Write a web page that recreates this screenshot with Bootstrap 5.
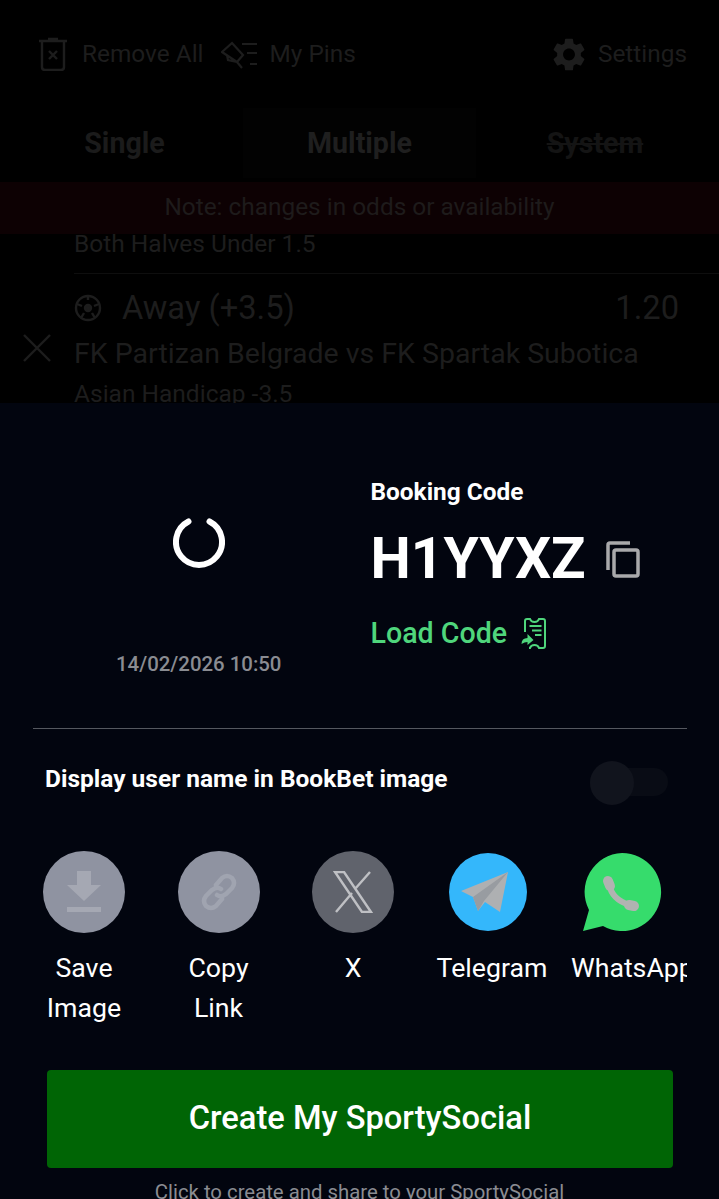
<!DOCTYPE html>
<html lang="en">
<head>
    <meta charset="UTF-8">
    <meta name="viewport" content="width=device-width, initial-scale=1.0">
    <title>Booking Code</title>
    <link href="https://cdn.jsdelivr.net/npm/bootstrap@5.3.2/dist/css/bootstrap.min.css" rel="stylesheet">
    <style>
        html, body { height: 1199px; overflow: hidden; background: #02050f; font-family: Roboto, "Liberation Sans", sans-serif; }
        .page-wrap { width: 719px; height: 1199px; overflow: hidden; }

        /* dimmed bet slip behind the sheet */
        .slip { height: 403px; overflow: hidden; background: #000; color: #1d1d1d; }
        .slip-tools { height: 108px; padding: 0 32px 0 38px; font-size: 24.4px; }
        .tool-gap-a { margin-left: 14px; }
        .tool-gap-b { margin-left: 17px; }
        .tool-gap-c { margin-left: 11px; }
        .tool-gap-d { margin-left: 13px; }
        .slip-tabs { height: 74px; }
        .slip-tab { height: 70px; width: 243px; font-size: 28.6px; font-weight: 700; color: #1b1b1b; }
        .slip-tab-first { padding-left: 6px; }
        .slip-tab-mid { width: 233px; background: #020202; color: #1f1f1f; }
        .slip-tab-off { color: #141414; text-decoration: line-through; padding-right: 5px; }
        .slip-note { height: 52px; padding-bottom: 2px; background: #0d0103; color: #1e1b1b; font-size: 24.4px; }
        .slip-body { padding: 0 0 0 74px; }
        .slip-close { left: 22px; top: 333px; }
        .slip-market { font-size: 24.5px; line-height: 30px; }
        .slip-market-top { margin-top: -5px; }
        .slip-market-end { margin-top: 6px; }
        .slip-sep { height: 1px; background: #0e0e0e; margin: 14px 0 16px; }
        .slip-pick { font-size: 32.7px; line-height: 36px; padding-right: 40px; }
        .slip-teams { font-size: 28.5px; line-height: 38px; margin-top: 9px; }

        /* share sheet */
        .sheet { height: 796px; background: #02050f; color: #fff; }
        .code-box { height: 325px; }
        .code-left { width: 370.5px; padding: 113px 0 0 27px; }
        .code-spin { width: 52px; height: 52px; }
        .code-date { font-size: 20.4px; color: #8a8c92; margin-top: 84px; line-height: 24px; font-weight: 500; }
        .code-label { font-size: 24.4px; font-weight: 700; line-height: 30px; margin-top: 74px; }
        .code-value { font-size: 57px; font-weight: 700; line-height: 68px; margin-top: 18px; }
        .code-copy { margin-left: 20px; }
        .code-load { font-size: 28.6px; font-weight: 500; color: #4fd67c; line-height: 34px; margin-top: 23px; }
        .code-ticket { margin-left: 14px; }
        .sheet-rule { height: 1px; margin: 0 32px 0 33px; background: #55585f; }
        .name-row { height: 102px; padding: 0 51px 0 45px; font-size: 24.5px; font-weight: 700; }
        .name-text { margin-bottom: 2px; }
        .name-toggle { width: 78px; height: 28px; margin-top: 3px; border-radius: 14px; background: #090c15; }
        .name-knob { left: 0; top: -7px; width: 44px; height: 44px; border-radius: 50%; background: #11141d; }
        .share-row { margin: 20px 32px 0 33px; overflow: hidden; gap: 32.5px; }
        .share-item { width: 102px; flex: none; font-size: 26.7px; line-height: 40px; text-align: center; }
        .share-ico { width: 82px; height: 82px; margin: 0 auto 15px; }
        .share-last { text-align: left; white-space: nowrap; width: 120px; }
        .share-last .share-ico { margin-left: 10px; }
        .share-dl { background: #8f93a1; }
        .share-x { background: #60636c; }
        .create-btn { margin: 42px 46px 0 47px; width: 626px; height: 98px; border-radius: 4px; background: #006505; border: 0; color: #fff; font-size: 32.7px; font-weight: 500; }
        .create-btn:hover { background: #006505; color: #fff; }
        .create-note { font-size: 20.35px; color: #8a8c92; line-height: 24px; margin-top: 12px; }
    </style>
</head>
<body>
    <div class="page-wrap">
        <!-- bet slip dimmed by the overlay -->
        <div class="slip position-relative">
            <div class="slip-tools d-flex align-items-center">
                <svg width="30" height="34" viewBox="0 0 30 34" fill="none" stroke="#1d1d1d" stroke-width="2.4"><path d="M1 4h28M10 2h10M4 5v25q0 3 3 3h16q3 0 3-3V5M11 14l8 8M19 14l-8 8"/></svg>
                <span class="tool-gap-a">Remove All</span>
                <svg class="tool-gap-b" width="38" height="32" viewBox="0 0 38 32" fill="none" stroke="#1d1d1d" stroke-width="2.2"><path d="M1 14L11 5l11 12-6 7zM6 17l1 5 9 2M16 24l5 6M21 6h15M26 15h10M29 26h7"/></svg>
                <span class="tool-gap-c">My Pins</span>
                <svg class="ms-auto" width="32" height="33" viewBox="2.3 2 19.4 20"><path fill="#1d1d1d" d="M19.14 12.94c.04-.3.06-.61.06-.94 0-.32-.02-.64-.07-.94l2.03-1.58c.18-.14.23-.41.12-.61l-1.92-3.32c-.12-.22-.37-.29-.59-.22l-2.39.96c-.5-.38-1.03-.7-1.62-.94l-.36-2.54c-.04-.24-.24-.41-.48-.41h-3.84c-.24 0-.43.17-.47.41l-.36 2.54c-.59.24-1.13.57-1.62.94l-2.39-.96c-.22-.08-.47 0-.59.22L2.74 8.87c-.12.21-.08.47.12.61l2.03 1.58c-.05.3-.09.63-.09.94s.02.64.07.94l-2.03 1.58c-.18.14-.23.41-.12.61l1.92 3.32c.12.22.37.29.59.22l2.39-.96c.5.38 1.03.7 1.62.94l.36 2.54c.05.24.24.41.48.41h3.84c.24 0 .44-.17.47-.41l.36-2.54c.59-.24 1.13-.56 1.62-.94l2.39.96c.22.08.47 0 .59-.22l1.92-3.32c.12-.22.07-.47-.12-.61l-2.01-1.58zM12 15.6c-1.98 0-3.6-1.62-3.6-3.6s1.62-3.6 3.6-3.6 3.6 1.62 3.6 3.6-1.62 3.6-3.6 3.6z"/></svg>
                <span class="tool-gap-d">Settings</span>
            </div>
            <div class="slip-tabs d-flex">
                <div class="slip-tab slip-tab-first d-flex align-items-center justify-content-center">Single</div>
                <div class="slip-tab slip-tab-mid d-flex align-items-center justify-content-center">Multiple</div>
                <div class="slip-tab slip-tab-off d-flex align-items-center justify-content-center flex-fill">System</div>
            </div>
            <div class="slip-note d-flex align-items-center justify-content-center">Note: changes in odds or availability</div>
            <div class="slip-body">
                <div class="slip-market slip-market-top">Both Halves Under 1.5</div>
                <div class="slip-sep"></div>
                <div class="slip-pick d-flex align-items-center">
                    <svg width="28" height="28" viewBox="0 0 28 28" fill="none" stroke="#1d1d1d" stroke-width="2.4"><circle cx="14" cy="14" r="12"/><circle cx="14" cy="14" r="3" fill="#1d1d1d"/><path d="M14 2v4M3 10l5 2M25 10l-5 2M7 24l3-5M21 24l-3-5"/></svg>
                    <span class="ms-3 ps-1">Away (+3.5)</span>
                    <span class="ms-auto">1.20</span>
                </div>
                <div class="slip-teams">FK Partizan Belgrade vs FK Spartak Subotica</div>
                <div class="slip-market slip-market-end">Asian Handicap -3.5</div>
            </div>
            <svg class="slip-close position-absolute" width="30" height="30" viewBox="0 0 30 30" stroke="#1d1d1d" stroke-width="2.4"><path d="M2 2l26 26M28 2L2 28"/></svg>
        </div>

        <!-- share sheet -->
        <div class="sheet">
            <div class="code-box d-flex">
                <div class="code-left d-flex flex-column align-items-center">
                    <svg class="code-spin" viewBox="0 0 52 52" fill="none" stroke="#fff" stroke-width="6" stroke-linecap="round"><path d="M15.5 5.5a23 23 0 1 0 21 0"/></svg>
                    <div class="code-date">14/02/2026 10:50</div>
                </div>
                <div>
                    <div class="code-label">Booking Code</div>
                    <div class="code-value d-flex align-items-center">H1YYXZ
                        <svg class="code-copy" width="34" height="38" viewBox="0 0 34 38" fill="none" stroke="#a9a9ab" stroke-width="3.5"><path d="M2 30V5q0-2 2-2h20"/><rect x="8" y="10" width="24" height="26" rx="2"/></svg>
                    </div>
                    <div class="code-load d-flex align-items-center">Load Code
                        <svg class="code-ticket" width="26" height="31" viewBox="0 0 26 31" fill="none" stroke="#4fd67c" stroke-width="2"><path d="M4 14V3q0-2 2-2h3q1 3 4.500 3T18 1h4q2 0 2 2v25q0 2-2 2h-4q-1-3-4.500-3T9 30H8M8.500 8h12M11 12.500h9.500M14 17h6.500"/><path d="M.5 26q0-6 6-6v-4l6 6-6 5v-3q-3 0-6 2z" fill="#4fd67c" stroke="none"/></svg>
                    </div>
                </div>
            </div>
            <div class="sheet-rule"></div>
            <div class="name-row d-flex align-items-center justify-content-between">
                <span class="name-text">Display user name in BookBet image</span>
                <div class="name-toggle position-relative">
                    <div class="name-knob position-absolute"></div>
                </div>
            </div>
            <div class="share-row d-flex">
                <div class="share-item">
                    <div class="share-ico share-dl rounded-circle d-flex align-items-center justify-content-center">
                        <svg width="36" height="42" viewBox="0 0 36 42" fill="#a5a8b3"><path d="M11 0h14v14h10L18 30 1 14h10zM1 36h34v5H1z"/></svg>
                    </div>
                    Save Image
                </div>
                <div class="share-item">
                    <div class="share-ico share-dl rounded-circle d-flex align-items-center justify-content-center">
                        <svg width="38" height="38" viewBox="0 0 38 38" fill="none" stroke="#a0a4b0" stroke-width="4.500" stroke-linecap="round"><path d="M16 12l6-7q5-4 10 0 4 5 0 10l-6 6q-5 4-9 1M22 26l-6 7q-5 4-10 0-4-5 0-10l6-6q5-4 9-1"/></svg>
                    </div>
                    Copy Link
                </div>
                <div class="share-item">
                    <div class="share-ico share-x rounded-circle d-flex align-items-center justify-content-center">
                        <svg width="40" height="42" viewBox="0 0 40 42" fill="none" stroke="#bfc0c4" stroke-width="2.4"><path d="M2 1h9l27 40h-9zM37 1L22 18M3 41l16-19"/></svg>
                    </div>
                    X
                </div>
                <div class="share-item">
                    <div class="share-ico rounded-circle d-flex align-items-center justify-content-center">
                        <svg width="80" height="80" viewBox="0 0 80 80"><circle cx="40" cy="40" r="39" fill="#34b7fb"/><path fill="#aeb0b2" d="M13 39L60 20 52 60 37 50 30 59 25 45z"/><path fill="#989ca1" d="M25 45L60 20 36 49 30 59z"/></svg>
                    </div>
                    Telegram
                </div>
                <div class="share-item share-last">
                    <div class="share-ico d-flex align-items-center justify-content-center">
                        <svg width="82" height="82" viewBox="0 0 82 82"><path fill="#36dc6c" d="M41 2a39 39 0 1 1-19 73L2 80l6-21A39 39 0 0 1 41 2z"/><g fill="none" stroke="#b1b3b1" stroke-linecap="round"><path stroke-width="6" d="M28 33Q31 49 49 54"/><path stroke-width="10" d="M27 30l2 5M48 54l5 1"/></g></svg>
                    </div>
                    WhatsApp
                </div>
            </div>
            <button type="button" class="btn create-btn d-block">Create My SportySocial</button>
            <div class="create-note text-center">Click to create and share to your SportySocial</div>
        </div>
    </div>

    <script src="https://cdn.jsdelivr.net/npm/bootstrap@5.3.2/dist/js/bootstrap.bundle.min.js"></script>
</body>
</html>
